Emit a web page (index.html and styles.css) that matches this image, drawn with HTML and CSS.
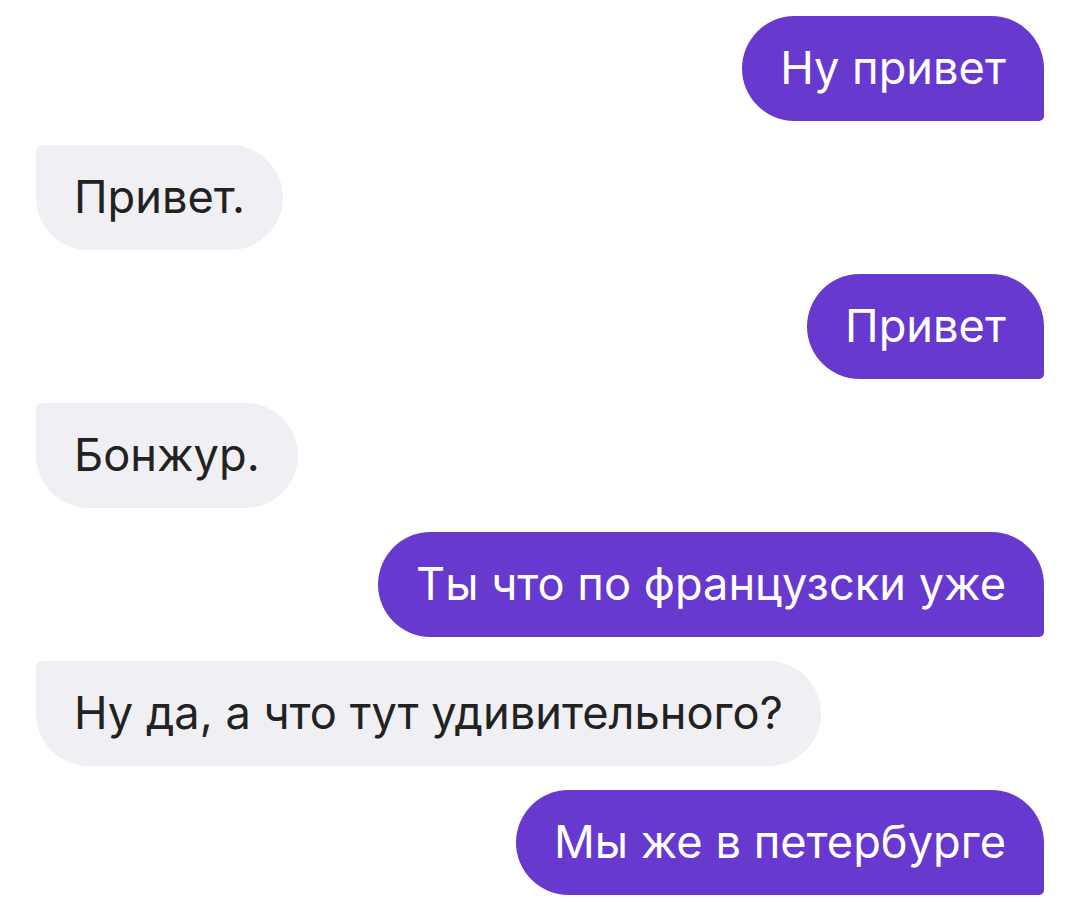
FILE: index.html
```html
<!DOCTYPE html>
<html lang="ru">
<head>
<meta charset="utf-8">
<link rel="stylesheet" href="styles.css">
</head>
<body>
<div class="chat">
  <div class="msg out">Ну привет</div>
  <div class="msg in">Привет.</div>
  <div class="msg out">Привет</div>
  <div class="msg in">Бонжур.</div>
  <div class="msg out">Ты что по французски уже</div>
  <div class="msg in">Ну да, а что тут удивительного?</div>
  <div class="msg out">Мы же в петербурге</div>
</div>
</body>
</html>
```

FILE: styles.css
```css
html, body {
  margin: 0;
  padding: 0;
  background: #ffffff;
}
.chat {
  display: flex;
  flex-direction: column;
  gap: 24px;
  padding: 16px 36px 0 36px;
  font-family: Inter, "Noto Sans", sans-serif;
}
.msg {
  height: 105px;
  display: flex;
  align-items: center;
  padding: 0 38px 2px;
  font-size: 45.2px;
  white-space: nowrap;
  box-sizing: border-box;
}
.out {
  align-self: flex-end;
  background: #6839cf;
  color: #ffffff;
  border-radius: 53px 53px 5px 53px;
}
.in {
  align-self: flex-start;
  background: #f0f0f4;
  color: #222222;
  border-radius: 6px 53px 53px 53px;
}
```
